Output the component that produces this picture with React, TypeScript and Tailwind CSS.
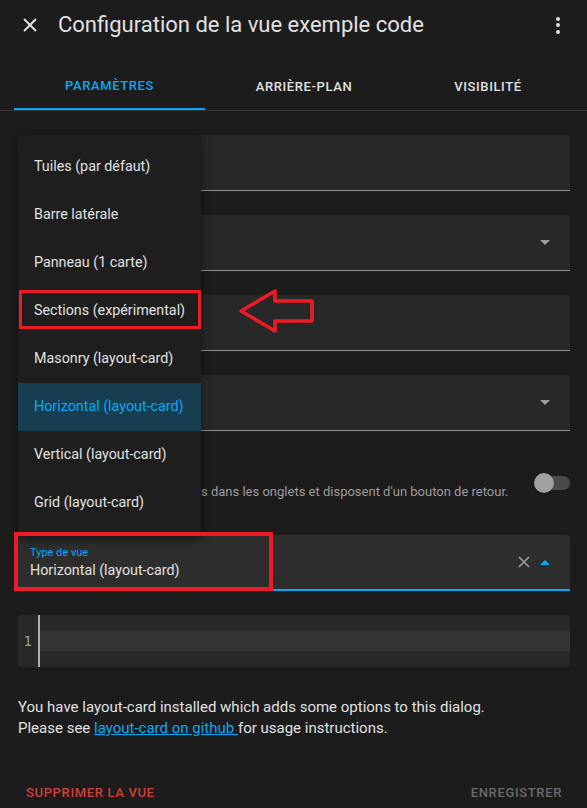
import React from "react";

const menuItems = [
  "Tuiles (par défaut)",
  "Barre latérale",
  "Panneau (1 carte)",
  "Sections (expérimental)",
  "Masonry (layout-card)",
  "Horizontal (layout-card)",
  "Vertical (layout-card)",
  "Grid (layout-card)",
];

const Caret = ({ up = false, color = "#9e9e9e" }: { up?: boolean; color?: string }) => (
  <svg width="10" height="5" viewBox="0 0 10 5">
    <path d={up ? "M0 5 L5 0 L10 5 Z" : "M0 0 L5 5 L10 0 Z"} fill={color} />
  </svg>
);

const Field = ({ caret = false }: { caret?: boolean }) => (
  <div className="flex h-[56px] items-center justify-end rounded-t-[4px] border-b border-[#8c8c8c] bg-[#282828] pr-[20px]">
    {caret && <Caret />}
  </div>
);

export default function App() {
  return (
    <div
      className="relative h-[808px] w-[587px] overflow-hidden bg-[#1c1c1c] text-[#e1e1e1]"
      style={{ fontFamily: "Roboto, 'Noto Sans', sans-serif" }}
    >
      {/* entête */}
      <div className="flex h-[50px] items-center">
        <div className="flex w-[58px] justify-center">
          <svg width="14" height="14" viewBox="0 0 14 14" className="ml-[2px]">
            <path d="M1 1 L13 13 M13 1 L1 13" stroke="#e1e1e1" strokeWidth="2" />
          </svg>
        </div>
        <div className="flex-1 text-[22px] leading-none">Configuration de la vue exemple code</div>
        <div className="mr-[27px] flex flex-col gap-[2.5px]">
          <span className="h-[4px] w-[4px] rounded-full bg-[#e1e1e1]" />
          <span className="h-[4px] w-[4px] rounded-full bg-[#e1e1e1]" />
          <span className="h-[4px] w-[4px] rounded-full bg-[#e1e1e1]" />
        </div>
      </div>

      {/* onglets */}
      <div className="flex h-[61px] border-b border-[#363636] pl-[14px] text-[13px] font-medium tracking-[0.6px]">
        <div className="flex w-[191px] items-center justify-center border-b-2 border-[#03a9f4] pt-[14px] text-[#03a9f4]">
          PARAMÈTRES
        </div>
        <div className="flex w-[198px] items-center justify-center pt-[14px] text-[#e1e1e1]">ARRIÈRE-PLAN</div>
        <div className="flex w-[170px] items-center justify-center pt-[14px] text-[#e1e1e1]">VISIBILITÉ</div>
      </div>

      {/* contenu */}
      <div className="flex flex-col gap-[24px] pl-[18px] pr-[17px] pt-[24px]">
        <Field />
        <Field caret />
        <Field />
        <Field caret />

        <div className="flex h-[56px] justify-between">
          <div className="pl-[183px] pt-[29px] text-[13px] leading-[16px] text-[#9b9b9b]">
            s dans les onglets et disposent d'un bouton de retour.
          </div>
          <div className="relative mt-[18px] h-[20px] w-[36px]">
            <div className="absolute left-[8px] top-[3px] h-[14px] w-[28px] rounded-full bg-[#4a4a4a]" />
            <div className="absolute left-0 top-0 h-[20px] w-[20px] rounded-full bg-[#a0a0a0] shadow" />
          </div>
        </div>

        <div className="flex h-[56px] items-center rounded-t-[4px] border-b-2 border-[#03a9f4] bg-[#2d2d2d] pl-[12px] pr-[20px]">
          <div className="flex flex-1 flex-col pt-[2px]">
            <span className="text-[11px] leading-[14px] text-[#03a9f4]">Type de vue</span>
            <span className="text-[14.3px] leading-[20px] text-[#e1e1e1]">Horizontal (layout-card)</span>
          </div>
          <svg width="12" height="12" viewBox="0 0 12 12" className="mr-[10px]">
            <path d="M1 1 L11 11 M11 1 L1 11" stroke="#9e9e9e" strokeWidth="1.6" />
          </svg>
          <Caret up color="#03a9f4" />
        </div>

        {/* éditeur de code */}
        <div className="flex h-[52px] rounded-[4px] bg-[#282828]">
          <div
            className="flex w-[22px] items-center justify-end border-r-2 border-[#b0b0b0] pr-[6px] text-[14px] text-[#9a9a9a]"
            style={{ fontFamily: "'DejaVu Sans Mono', monospace" }}
          >
            1
          </div>
          <div className="flex flex-1 flex-col pt-[16px]">
            <div className="h-[20px] bg-[#333333]" />
          </div>
        </div>

        <div className="pt-[6px] text-[15px] leading-[21px] text-[#e1e1e1]">
          You have layout-card installed which adds some options to this dialog.
          <br />
          Please see{" "}
          <span className="text-[#03a9f4] underline">layout-card on github </span>
          for usage instructions.
        </div>
      </div>

      {/* boutons */}
      <div className="absolute bottom-[7px] left-[18px] right-[17px] flex h-[16px] items-center justify-between text-[13px] font-medium tracking-[0.65px]">
        <span className="pl-[8px] text-[#cf4035]">SUPPRIMER LA VUE</span>
        <span className="pr-[8px] text-[#6a6a6a]">ENREGISTRER</span>
      </div>

      {/* menu déroulant */}
      <div className="absolute left-[18px] top-[135px] w-[183px] rounded-[4px] bg-[#1e1e1e] py-[8px] shadow-[0_5px_10px_rgba(0,0,0,0.5)]">
        {menuItems.map((item) => {
          const selected = item === "Horizontal (layout-card)";
          return (
            <div
              key={item}
              className={`flex h-[48px] items-center pl-[16px] text-[14.3px] ${
                selected ? "bg-[#173d50] text-[#03a9f4]" : "text-[#e1e1e1]"
              }`}
            >
              {item}
            </div>
          );
        })}
      </div>

      {/* annotations */}
      <div className="absolute left-[19px] top-[290px] h-[39px] w-[182px] border-[3px] border-[#ed1c24]" />
      <div className="absolute left-[14px] top-[532px] h-[59px] w-[259px] border-[4px] border-[#ed1c24]" />
      <svg className="absolute left-[236px] top-[287px]" width="80" height="48" viewBox="236 287 80 48">
        <path
          d="M241 311 L275 291 L275 301 L312 301 L312 321 L275 321 L275 331 Z"
          fill="none"
          stroke="#ed1c24"
          strokeWidth="3.5"
          strokeLinejoin="round"
        />
      </svg>
    </div>
  );
}
